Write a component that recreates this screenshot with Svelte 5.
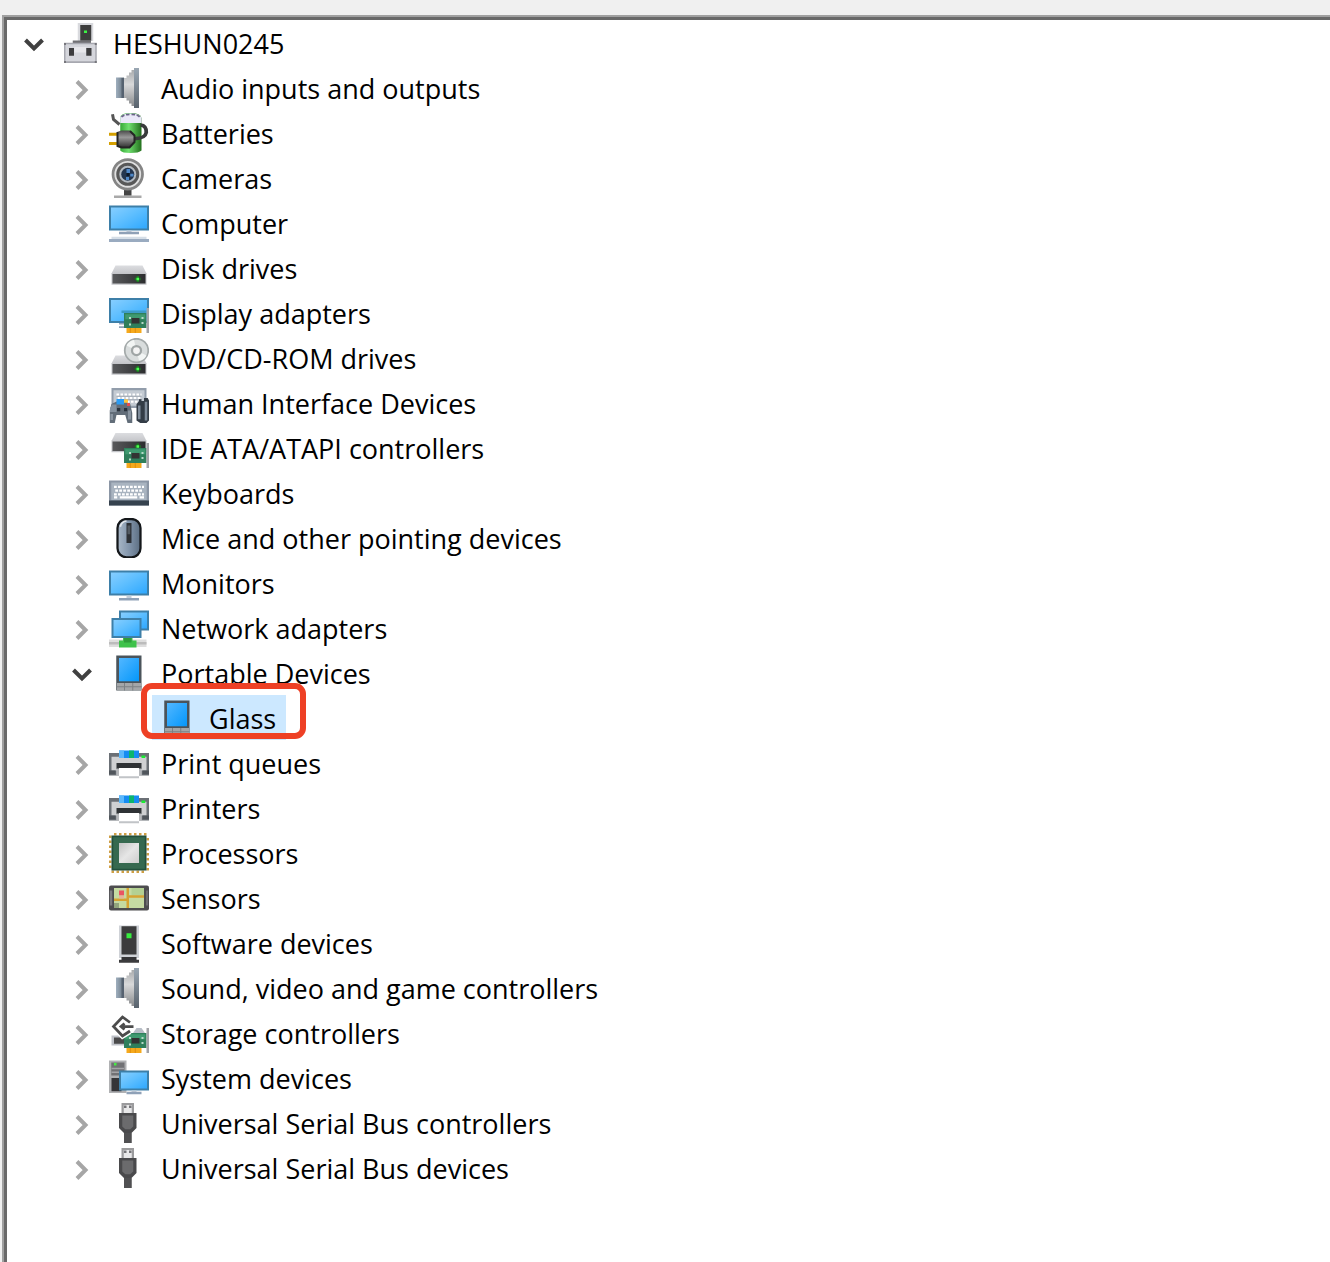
<script lang="ts">
  type Device = { name: string; icon: string; children?: string[] };

  const computerName = 'HESHUN0245';
  const categories: Device[] = [
    { name: 'Audio inputs and outputs', icon: 'speaker' },
    { name: 'Batteries', icon: 'battery' },
    { name: 'Cameras', icon: 'camera' },
    { name: 'Computer', icon: 'computer' },
    { name: 'Disk drives', icon: 'disk' },
    { name: 'Display adapters', icon: 'display' },
    { name: 'DVD/CD-ROM drives', icon: 'dvd' },
    { name: 'Human Interface Devices', icon: 'hid' },
    { name: 'IDE ATA/ATAPI controllers', icon: 'ide' },
    { name: 'Keyboards', icon: 'keyboard' },
    { name: 'Mice and other pointing devices', icon: 'mouse' },
    { name: 'Monitors', icon: 'monitor' },
    { name: 'Network adapters', icon: 'network' },
    { name: 'Portable Devices', icon: 'portable', children: ['Glass'] },
    { name: 'Print queues', icon: 'printer' },
    { name: 'Printers', icon: 'printer' },
    { name: 'Processors', icon: 'processor' },
    { name: 'Sensors', icon: 'sensor' },
    { name: 'Software devices', icon: 'software' },
    { name: 'Sound, video and game controllers', icon: 'speaker' },
    { name: 'Storage controllers', icon: 'storage' },
    { name: 'System devices', icon: 'system' },
    { name: 'Universal Serial Bus controllers', icon: 'usb' },
    { name: 'Universal Serial Bus devices', icon: 'usb' }
  ];

  let rootOpen = $state(true);
  let open: Record<string, boolean> = $state({ 'Portable Devices': true });
</script>

{#snippet screen(x: number, y: number, w: number, h: number)}
  <rect {x} {y} width={w} height={h} fill="#3d7fa8" />
  <rect x={x + 0.8} y={y + 0.8} width={w - 1.6} height={h - 1.6} fill="url(#glass)" />
{/snippet}

{#snippet card(y: number)}
  <rect x="7" y={y + 6} width="6" height="2" fill="#f5a91c" />
  <path d={`M8.5 ${y + 6}v2M10.5 ${y + 6}v2`} stroke="#e08c0c" stroke-width=".4" />
  <rect x="6" {y} width="9" height="6" fill="#2f7f5b" />
  <rect x="6.5" y={y + 0.5} width="8" height="2" fill="#3f9a70" />
  <rect x="9" y={y + 2} width="3.2" height="2.2" fill="#333" />
  <path d={`M8 ${y + 1.6}h.8v.8H8zM13 ${y + 1.6}h.8v.8H13zM8 ${y + 4.2}h.8v.8H8zM13 ${y + 3.6}h.8v.8H13z`} fill="#b9d9c9" />
  <rect x="15" y={y - 2} width="1" height="10" fill="#a3a3a8" />
{/snippet}

{#snippet drive(y: number)}
  <path d={`M2.6 ${y}H13.4L15 ${y + 3.2}H1z`} fill="url(#silver)" />
  <rect x="1" y={y + 3} width="14" height="4.7" fill="#c4c5c9" />
  <rect x="1.4" y={y + 3.4} width="13.2" height="3.8" fill="url(#dark)" />
  <path d={`M10.3 ${y + 5.4}h2.4M11.5 ${y + 4.2}v2.4`} stroke="#1c7a22" stroke-width="1" />
  <rect x="11" y={y + 4.9} width="1" height="1" fill="#4dff52" />
{/snippet}

{#snippet icon(name: string)}
  <svg class="icon" viewBox="0 0 16 16" aria-hidden="true">
    {#if name === 'host'}
      <rect x="6.7" y="0" width="6.2" height="7.2" fill="#d9dade" />
      <rect x="7.7" y=".8" width="4.4" height="6.3" fill="#3d3d3d" />
      <rect x="9.2" y="3" width="1.2" height="1" fill="#3df345" />
      <rect x="4.7" y="7" width="7.3" height="1" fill="#707074" />
      <rect x="1.2" y="7.9" width="13.1" height="8.1" fill="#a7a8b0" />
      <rect x="1.8" y="8.5" width="11.9" height="6.8" fill="#d5d6dc" />
      <rect x="5.3" y="9.6" width="4.8" height="2.2" fill="#e7e7eb" />
      <path d="M3.2 10h2v3.1h-2zM10.1 10h2.1v3.1h-2.1z" fill="#3c3c3e" />
      <path d="M1.2 8h.8v.8h-.8zM13.5 8h.8v.8h-.8zM1.2 15.2h.8v.8h-.8zM13.5 15.2h.8v.8h-.8z" fill="#77777d" />
    {:else if name === 'speaker'}
      <rect x="2.8" y="3.8" width="3.2" height="8.2" fill="url(#steel)" />
      <rect x="5" y="4" width="1" height="8" fill="#566270" />
      <path d="M6 4L7 4V3H8V1.8H9V.8H10V15.2H9V14.2H8V13H7V12H6z" fill="url(#cone)" />
      <rect x="10" y="0" width="2" height="16" fill="url(#rim)" />
    {:else if name === 'battery'}
      <path d="M4.5 2Q4.5 0 8.6 0T13 2V15Q12 16 8.6 16T4.5 15z" fill="url(#green)" />
      <path d="M4.5 4V1.8Q5 .2 8.6 .2T13 1.8V4z" fill="#e9e8f8" />
      <path d="M5 1.6Q6 .5 8.7 .5T12.3 1.6" fill="none" stroke="#6a6488" stroke-width=".7" stroke-dasharray="1.4 .7" />
      <path d="M1.4 .5L1.8 2.6L4.2 4.6" fill="none" stroke="#555" stroke-width="1.2" />
      <path d="M9.7 10.2Q14.4 10.4 14.9 7.8Q15 5 12.6 4.8" fill="none" stroke="#393b3c" stroke-width="1.5" />
      <path d="M0 8.5H3.6M0 12.2H3.6" stroke="#d5a000" stroke-width="1.2" />
      <path d="M3.2 7.6L5 7H8.4L10.2 9V11.7L8.2 13.8H5L3.2 13.2z" fill="url(#plug)" />
      <path d="M3.4 7.6V13.2L5 13.8H8.2L10.2 11.6V9L8.4 7.2" fill="none" stroke="#242424" stroke-width=".8" />
    {:else if name === 'camera'}
      <rect x="6" y="12.3" width="3" height="2.8" fill="#444" />
      <rect x="2" y="15" width="11" height="1" fill="#a9a9a9" />
      <circle cx="7.5" cy="6.5" r="5.9" fill="#e0e0e0" stroke="#858585" stroke-width="1.1" />
      <circle cx="7.5" cy="6.5" r="4" fill="#b3bac1" stroke="#585858" stroke-width="1.2" />
      <circle cx="7.5" cy="6.5" r="2.6" fill="#24364f" />
      <path d="M7 4.4H8.4V6H7zM8.5 6.3H9.8V7.4H8.5zM6.8 7.6H8V8.8H6.8z" fill="#4f88c8" />
      <rect x="7" y="6" width="1.2" height="1.2" fill="#0b1829" />
    {:else if name === 'computer'}
      {@render screen(0, 1, 16, 10)}
      <rect x="7" y="11" width="2" height="1" fill="#c3ceda" />
      <rect x="4" y="11.5" width="8" height="1" fill="#8fa1b7" />
      <rect x="1" y="13.5" width="14" height="1" fill="#d5dee7" />
      <rect x="0" y="14.4" width="16" height="1.2" fill="#9aabc0" />
    {:else if name === 'disk'}
      {@render drive(7)}
    {:else if name === 'display'}
      {@render screen(0, 2, 16, 10)}
      <path d="M4 13.3H6V14H4zM6 12H4V12.6H6z" fill="#8fa1b7" />
      <rect x="5" y="7" width="10" height="1" fill="#3d9cc9" />
      {@render card(8)}
    {:else if name === 'dvd'}
      {@render drive(7)}
      <circle cx="11" cy="5" r="4.7" fill="#d9dddd" stroke="#a4aaaa" stroke-width=".7" />
      <path d="M11 5L7 3Q8 1 10 .8zM11 5L15 7Q14 9 12 9z" fill="#f2f5f4" />
      <circle cx="11" cy="5" r="1.8" fill="#f4f4f4" stroke="#a0a6a6" stroke-width=".9" />
    {:else if name === 'hid'}
      <rect x="1" y="2" width="14" height="8" fill="#929dab" />
      <rect x="1.8" y="2.9" width="12.4" height="6.2" fill="#c4cbd3" />
      <path d="M3 4.6H13M3.5 6H13M4 7.4H13" stroke="#fff" stroke-width=".9" stroke-dasharray="1 .6" />
      <path d="M3 5.3H13M3.5 6.7H13" stroke="#a1a9b3" stroke-width=".4" />
      <path d="M1 8.4L3 7.4H6.6L8.5 8.4L9.3 12V16H7.4L6.5 12.8H3L2.3 16H.3V11z" fill="#626d79" />
      <path d="M.4 10L1.3 8.6H3v3H.4z" fill="#8793a0" />
      <path d="M7.6 11h1.2v3.6H7.6zM.6 12.4h1v2.4h-1z" fill="#8a95a1" />
      <rect x="3" y="6.4" width="3" height="2.2" fill="#2c9cf3" />
      <path d="M6 6.6h1.6v1.3H6z" fill="#ffc83c" />
      <path d="M7.2 8h1.2v1.2H7.2z" fill="#e84c4c" />
      <rect x="3.2" y="10" width="1.3" height="1.3" fill="#29323c" />
      <rect x="6" y="10" width="1.3" height="1.3" fill="#29323c" />
      <path d="M11 8.5L12 7.2V6.5H13V7.2H14V6H15.5L16 7V15L15 16H12.5L11 15z" fill="#333c46" />
      <path d="M11.6 9h1v5.5h-1zM14.3 7.5h1v7.5h-1z" fill="#7f8c9a" />
    {:else if name === 'ide'}
      {@render drive(2)}
      {@render card(8)}
    {:else if name === 'keyboard'}
      <rect x="0" y="3" width="16" height="10" fill="#8b96a5" />
      <rect x=".9" y="3.8" width="14.2" height="7" fill="#a9b4c0" />
      <path d="M2 5.5H14M2.5 7H13.5M2 8.5H14" stroke="#fff" stroke-width=".9" stroke-dasharray="1.1 .5" />
      <path d="M2 9.7H3.3M4.3 9.7H11.3M12.2 9.7H14" stroke="#fff" stroke-width=".9" />
      <rect x="0" y="11" width="16" height="2" fill="#36424e" />
    {:else if name === 'mouse'}
      <rect x="3.4" y=".4" width="9.2" height="15.3" rx="3.6" fill="url(#mouseBody)" stroke="#14171a" stroke-width=".9" />
      <path d="M4.5 3.5Q5 1.4 7 1.2" fill="none" stroke="#e2e7ec" stroke-width=".7" />
      <rect x="7" y="2" width="2" height="8" fill="#2d3136" />
      <rect x="7.4" y="3" width="1.1" height="3.5" fill="#525a62" />
    {:else if name === 'monitor'}
      {@render screen(0, 3, 16, 10)}
      <rect x="7" y="13" width="2" height="1" fill="#c3ceda" />
      <rect x="4" y="14" width="8" height="1" fill="#8fa1b7" />
    {:else if name === 'network'}
      {@render screen(4, 1, 12, 8)}
      {@render screen(1, 4, 12, 8)}
      <rect x="0" y="12.6" width="15" height="3" fill="#dedede" />
      <rect x="0" y="13.6" width="15" height="1" fill="#bcbcbc" />
      <path d="M5.6 12H9.4V13H11V15.8H4V13H5.6z" fill="#3fc24b" />
      <rect x="6" y="12" width="3" height="1.8" fill="#2f9c3b" />
    {:else if name === 'portable'}
      <rect x="2.9" y="1" width="10.1" height="14" fill="#4b545b" />
      <rect x="4" y="2" width="8" height="9.3" fill="url(#phone)" />
      <rect x="3.2" y="12" width="9.6" height="2.8" fill="#a4a6a8" />
      <path d="M3 13.5H13M6.2 12V15M9.5 12V15" stroke="#7c8084" stroke-width=".4" />
    {:else if name === 'printer'}
      <rect x="0" y="4" width="16" height="9" fill="#6b7076" />
      <path d="M1 5.5H15V11H13V13H3V11H1z" fill="#cfd0d2" />
      <rect x="4" y="3" width="8" height="3" fill="#168cf2" />
      <rect x="4" y="3" width="2" height="3" fill="#5cb8fb" />
      <rect x="8" y="3" width="2" height="3" fill="#0cb56c" />
      <rect x="13" y="5" width="1.5" height="1" fill="#19ee32" />
      <rect x="3" y="8" width="10" height="2.4" fill="#2f3235" />
      <path d="M3 13V10.2H13V13z" fill="#b5b7ba" />
      <rect x="4" y="10" width="8" height="4" fill="#fff" />
      <rect x="4" y="13.3" width="8" height=".8" fill="#c1c4c7" />
      <path d="M0 11H2.6V12.5H0zM13.4 11H16V12.5H13.4z" fill="#51565c" />
    {:else if name === 'processor'}
      <path d="M2 .5H15M1 15.5H15" stroke="#cf9f45" stroke-width="1" stroke-dasharray="1 1" />
      <path d="M.5 1V15M15.5 2V15" stroke="#cf9f45" stroke-width="1" stroke-dasharray="1 1" />
      <rect x="1" y="1" width="14" height="14" fill="#23503c" />
      <rect x="1.7" y="1.7" width="12.6" height="12.6" fill="#36694f" />
      <rect x="4" y="4" width="8" height="8" fill="url(#die)" />
    {:else if name === 'sensor'}
      <rect x="0" y="3" width="16" height="10" rx=".8" fill="#4d4d4f" />
      <rect x=".3" y="5" width="1" height="6" fill="#7d7d80" />
      <rect x="14.8" y="5" width=".8" height="6" fill="#6d6d70" />
      <rect x="2" y="4" width="12" height="8" fill="#c5dba2" />
      <path d="M9 4H14V7H9z" fill="#b3d092" />
      <path d="M2 8.7H7.5M7.5 4V12M7.5 7.4H14" fill="none" stroke="#d5a332" stroke-width="1" />
      <rect x="4" y="5" width="2" height="2" fill="#ea5562" />
      <rect x="4" y="7" width="2" height="1.2" fill="#e5b59a" />
      <rect x="2" y="10" width="2" height="2" fill="#91a57d" />
    {:else if name === 'software'}
      <rect x="4" y="1" width="8" height="13" fill="#cfd2d7" />
      <rect x="5" y="1.3" width="6" height="11.3" fill="#3c3c3d" />
      <rect x="7" y="4.1" width="2" height="2" fill="#36ed3e" />
      <rect x="5" y="13.6" width="6" height="1.4" fill="#353537" />
      <rect x="4" y="14.7" width="8" height="1.2" fill="#3b3b3d" />
    {:else if name === 'storage'}
      <path d="M1 9V13H7V9z" fill="#bfc2c8" />
      <rect x="2" y="9.8" width="5" height="2.5" fill="#4a4a4a" />
      <path d="M9.6 8L11 6H13L14.4 8z" fill="#b7bdc6" />
      {@render card(8)}
      <path d="M8.4 3.8L5.4 1.8L1.8 5.4L5.4 9.2L8.4 7.4M4.8 5.4H9.8" fill="none" stroke="#fff" stroke-width="2.2" />
      <path d="M8.4 3.8L5.4 1.6L1.8 5.4L5.4 9.2L8.4 7.2M4.6 5.4H9.8M6.2 4.2L4.8 5.4L6.2 6.6" fill="none" stroke="#4c4c4c" stroke-width="1.1" />
    {:else if name === 'system'}
      <rect x="0" y="1" width="7" height="13" fill="#b0b1b3" />
      <rect x=".9" y="1.8" width="5.3" height="5.2" fill="#717174" />
      <rect x="2" y="2" width="1" height="1" fill="#46ec42" />
      <path d="M1 4.2H6M1 5.7H6" stroke="#a4a4a7" stroke-width=".6" />
      <rect x="1" y="8" width="4" height="5.3" fill="#353538" />
      {@render screen(4, 5, 12, 8)}
      <rect x="9" y="13" width="2" height="1" fill="#c3ceda" />
      <rect x="7" y="13.5" width="6" height="1" fill="#8fa1b7" />
    {:else if name === 'usb'}
      <rect x="5" y="0" width="5" height="4.5" fill="#9b9b9d" />
      <rect x="5.9" y=".8" width="3.2" height="3.4" fill="#e8e8e9" />
      <path d="M6 1h1v1H6zM8 1h1v1H8z" fill="#747478" />
      <path d="M4 4H11V10L9 12V16H6V12L4 10z" fill="#4a4a4c" />
      <path d="M5.3 5H9.7V9.4L8.5 10.5H6.5L5.3 9.4z" fill="#6b6b6d" />
      <rect x="6" y="12" width="3" height="4" fill="#505052" />
    {/if}
  </svg>
{/snippet}

{#snippet toggle(label: string, isOpen: boolean, flip: () => void)}
  <button class="toggle" class:open={isOpen} aria-label={`Toggle ${label}`} aria-expanded={isOpen} onclick={flip}>
    <svg viewBox="0 0 24 24" aria-hidden="true"><path d="M7 3.5L15.5 12L7 20.5" /></svg>
  </button>
{/snippet}

<svg class="paints" aria-hidden="true">
  <defs>
    <linearGradient id="glass" x1="0" y1="0" x2="1" y2="1"><stop offset="0" stop-color="#86ceff" /><stop offset=".45" stop-color="#5fbfff" /><stop offset="1" stop-color="#2ea8ff" /></linearGradient>
    <linearGradient id="phone" x1="0" y1="0" x2="1" y2="1"><stop offset="0" stop-color="#52b7ff" /><stop offset="1" stop-color="#0497fb" /></linearGradient>
    <linearGradient id="silver" x1="0" y1="0" x2="0" y2="1"><stop offset="0" stop-color="#dcdde0" /><stop offset="1" stop-color="#c5c6ca" /></linearGradient>
    <linearGradient id="dark"><stop offset="0" stop-color="#58595b" /><stop offset="1" stop-color="#2b2c2e" /></linearGradient>
    <linearGradient id="steel"><stop offset="0" stop-color="#a0b0bf" /><stop offset="1" stop-color="#66737f" /></linearGradient>
    <linearGradient id="cone" x1="0" y1="0" x2="0" y2="1"><stop offset="0" stop-color="#a9abad" /><stop offset=".4" stop-color="#d8d9da" /><stop offset="1" stop-color="#8b8d8f" /></linearGradient>
    <linearGradient id="rim" x1="0" y1="0" x2="0" y2="1"><stop offset="0" stop-color="#9aa7b3" /><stop offset="1" stop-color="#5a646e" /></linearGradient>
    <linearGradient id="green"><stop offset="0" stop-color="#36a937" /><stop offset=".4" stop-color="#6fdf6e" /><stop offset="1" stop-color="#23701d" /></linearGradient>
    <linearGradient id="plug" x1="0" y1="0" x2="0" y2="1"><stop offset="0" stop-color="#4a4a4a" /><stop offset=".4" stop-color="#999" /><stop offset="1" stop-color="#303030" /></linearGradient>
    <linearGradient id="mouseBody"><stop offset="0" stop-color="#a9b8c8" /><stop offset=".5" stop-color="#8295ab" /><stop offset="1" stop-color="#5c6e82" /></linearGradient>
    <linearGradient id="die" x1="0" y1="0" x2="1" y2="1"><stop offset="0" stop-color="#c3c3c3" /><stop offset=".5" stop-color="#e6e6e6" /><stop offset="1" stop-color="#cdcdcd" /></linearGradient>
  </defs>
</svg>

<main class="window">
  <div class="panel">
    <ul class="tree" aria-label="Devices">
      <li>
        <div class="row">
          {@render toggle(computerName, rootOpen, () => (rootOpen = !rootOpen))}
          <span class="item">{@render icon('host')}<span class="label">{computerName}</span></span>
        </div>
        {#if rootOpen}
          <ul>
            {#each categories as category}
              <li>
                <div class="row">
                  {@render toggle(category.name, !!open[category.name], () => (open[category.name] = !open[category.name]))}
                  <span class="item">{@render icon(category.icon)}<span class="label">{category.name}</span></span>
                </div>
                {#if category.children && open[category.name]}
                  <ul>
                    {#each category.children as child}
                      <li>
                        <div class="row">
                          <span class="spacer"></span>
                          <span class="item selected">
                            {@render icon(category.icon)}<span class="label">{child}</span>
                            <span class="marker"></span>
                          </span>
                        </div>
                      </li>
                    {/each}
                  </ul>
                {/if}
              </li>
            {/each}
          </ul>
        {/if}
      </li>
    </ul>
  </div>
</main>

<style>
  :global(body) {
    margin: 0;
    background: #f0f0f0;
  }

  .paints {
    position: absolute;
    width: 0;
    height: 0;
  }

  .window {
    box-sizing: border-box;
    min-height: 100vh;
    display: flex;
    padding: 15px 0 0 2px;
    overflow: hidden;
    background: #f0f0f0;
    color: #000;
    font: 27px/44px 'Open Sans', 'Noto Sans', sans-serif;
  }

  .panel {
    flex: 1;
    border: solid #a0a0a0;
    border-width: 2px 0 0 2px;
    background: #fff;
  }

  .tree {
    box-sizing: border-box;
    min-height: 100%;
    padding-left: 7px;
    border: solid #696969;
    border-width: 3px 0 0 3px;
  }

  ul {
    margin: 0;
    padding: 0;
    list-style: none;
  }

  ul ul {
    padding-left: 48px;
  }

  .row {
    display: flex;
    height: 45px;
  }

  .toggle,
  .spacer {
    flex: none;
    width: 40px;
    margin-right: 2px;
  }

  .toggle {
    display: flex;
    align-items: center;
    justify-content: center;
    padding: 5px 0 0;
    border: 0;
    background: none;
    color: #a6a6a6;
    cursor: pointer;
  }

  .toggle svg {
    width: 24px;
    height: 24px;
    fill: none;
    stroke: currentColor;
    stroke-width: 4;
  }

  .toggle.open {
    color: #404040;
  }

  .toggle.open svg {
    transform: rotate(90deg);
  }

  .item {
    position: relative;
    display: flex;
    align-items: center;
    gap: 12px;
    padding: 0 10px 0 5px;
    white-space: nowrap;
  }

  .label {
    padding-top: 2px;
  }

  .selected {
    background: #cce8ff;
  }

  .icon {
    flex: none;
    width: 40px;
    height: 40px;
  }

  .marker {
    position: absolute;
    inset: -12px -20px 1px -11px;
    border: 6px solid #ee4025;
    border-radius: 11px;
  }
</style>
